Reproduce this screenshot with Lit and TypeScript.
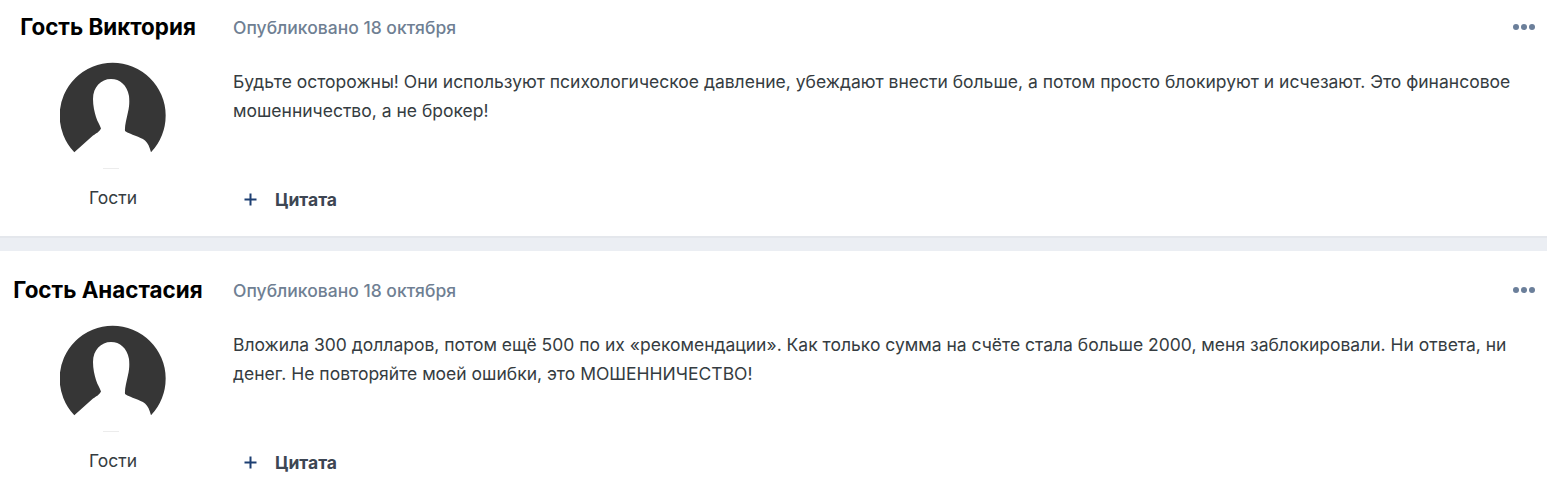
import { LitElement, css, html } from 'lit'
import { customElement, property } from 'lit/decorators.js'

const posts = [
  {
    name: 'Гость Виктория',
    text: 'Будьте осторожны! Они используют психологическое давление, убеждают внести больше, а потом просто блокируют и исчезают. Это финансовое мошенничество, а не брокер!',
  },
  {
    name: 'Гость Анастасия',
    text: 'Вложила 300 долларов, потом ещё 500 по их «рекомендации». Как только сумма на счёте стала больше 2000, меня заблокировали. Ни ответа, ни денег. Не повторяйте моей ошибки, это МОШЕННИЧЕСТВО!',
  },
]

@customElement('forum-post')
export class ForumPost extends LitElement {
  @property() name = ''
  @property() text = ''

  render() {
    return html`
      <article class="post">
        <aside class="author">
          <h3 class="name">${this.name}</h3>
          <svg class="avatar" width="106" height="108" viewBox="0 0 106 108">
            <path
              fill="#363636"
              d="M14.3 90.3A53 53 0 1 1 91 90.3C89.5 85 88 81 85 78.5C80 74.5 71 73 65 69C64.5 64 66.5 57 68 50C69.5 44 69.5 39 69 34C67 23 60 17 51 17C41 17 33 25 33 37C33 44 34.5 50 36 55C37.5 60 40 63 41 66.5C39 70 37 71 33 73.5Z"
            ></path>
            <rect x="43" y="106" width="16" height="1" fill="#ececec"></rect>
          </svg>
          <div class="group">Гости</div>
        </aside>
        <div class="main">
          <div class="meta">
            <span class="date">Опубликовано 18 октября</span>
            <span class="more"><i></i><i></i><i></i></span>
          </div>
          <p class="text">${this.text}</p>
          <div class="actions">
            <svg class="plus" width="13" height="13" viewBox="0 0 13 13">
              <path d="M6.5 0.5v12M0.5 6.5h12" stroke="#1d3f72" stroke-width="2" fill="none"></path>
            </svg>
            <span class="quote">Цитата</span>
          </div>
        </div>
      </article>
    `
  }

  static styles = css`
    :host {
      display: block;
    }
    .post {
      display: flex;
      height: 248px;
      background: #fff;
      border-bottom: 2px solid #e4e7ec;
      font-family: Inter, 'Noto Sans', sans-serif;
      font-size: 17.5px;
      color: #353c41;
    }
    .author {
      flex: 0 0 226px;
      display: flex;
      flex-direction: column;
      align-items: center;
      padding-top: 26px;
    }
    .name {
      margin: 0 10px 0 0;
      font-size: 22.4px;
      line-height: 26px;
      font-weight: 700;
      color: #000;
      white-space: nowrap;
    }
    .avatar {
      display: block;
      margin-top: 22px;
    }
    .group {
      margin-top: 17px;
      line-height: 22px;
    }
    .main {
      flex: 1;
      min-width: 0;
      padding: 11px 12px 0 7px;
    }
    .meta {
      display: flex;
      justify-content: space-between;
      align-items: center;
      height: 56px;
    }
    .date {
      font-weight: 500;
      color: #6f7f93;
    }
    .more {
      display: flex;
      gap: 2px;
    }
    .more i {
      display: block;
      width: 6px;
      height: 6px;
      border-radius: 50%;
      background: #6b7f9a;
    }
    .text {
      margin: 12px 0 0;
      line-height: 29px;
      height: 58px;
    }
    .actions {
      display: flex;
      align-items: center;
      margin-top: 61px;
      height: 26px;
      padding-left: 11px;
    }
    .quote {
      margin-left: 18px;
      font-weight: 700;
      color: #3d4653;
    }
  `
}

@customElement('app-root')
export class AppRoot extends LitElement {
  render() {
    return html`
      <section class="feed">
        ${posts.map((p) => html`<forum-post .name=${p.name} .text=${p.text}></forum-post>`)}
      </section>
    `
  }

  static styles = css`
    :host {
      display: block;
      height: 488px;
      overflow: hidden;
      background: #ebeef3;
    }
    .feed {
      display: flex;
      flex-direction: column;
      gap: 13px;
      margin-top: -12px;
    }
  `
}
